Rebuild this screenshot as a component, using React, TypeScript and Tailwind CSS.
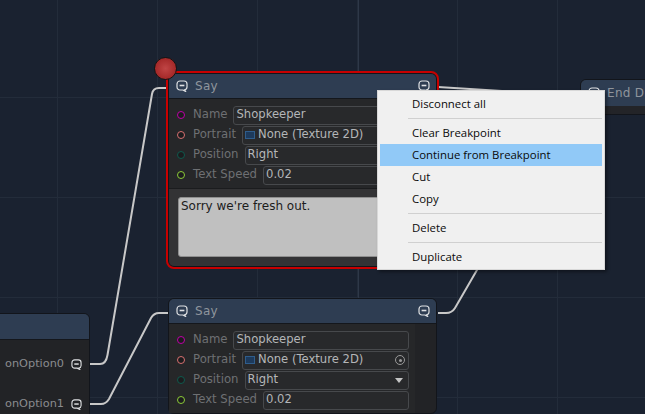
const uiFont = { fontFamily: '"DejaVu Sans", sans-serif' };

const BubbleIcon = ({ className }: { className?: string }) => (
    <svg viewBox="0 0 12 12" className={className} fill="none" stroke="#dfe1e3" strokeWidth="1.2">
        <path d="M4 1h4a3 3 0 0 1 3 3v3a3 3 0 0 1-2.400 2.900l.9 1.500-2.700-1.400H4a3 3 0 0 1-3-3V4a3 3 0 0 1 3-3z" />
        <path d="M3.600 5.500h4.800" strokeWidth="1.600" />
    </svg>
);

const Port = ({ color }: { color: string }) => (
    <span className={`w-[8px] h-[8px] rounded-full border-[1.5px] bg-[#1c1c1e] shrink-0 ${color}`} />
);

const Field = ({ children }: { children: React.ReactNode }) => (
    <div className="flex-1 h-[19px] flex items-center px-[2px] rounded-[3px] border border-[#47494c] bg-[#28292b] text-[11.6px] text-[#b4b6b8] whitespace-nowrap overflow-hidden">
        {children}
    </div>
);

const Row = ({ port, label, children }: { port: string; label: string; children: React.ReactNode }) => (
    <div className="h-[20px] flex items-center pl-[8px]">
        <Port color={port} />
        <span className="ml-[8px] mr-[6px] text-[11.7px] text-[#6e7073] whitespace-nowrap">{label}</span>
        {children}
    </div>
);

const SayNode = ({ selected, className }: { selected?: boolean; className: string }) => (
    <div className={`absolute w-[269px] rounded-[6px] border border-[#12151b] bg-[#222326] ${selected ? 'outline-2 outline-[#c80000]' : ''} ${className}`} style={uiFont}>
        <div className="h-[25px] flex items-center justify-between pl-[7px] pr-[6px] rounded-t-[5px] bg-[#2e3d52] border-b border-[#14171c]">
            <div className="flex items-center gap-[7px]">
                <BubbleIcon className="w-[12px] h-[12px]" />
                <span className="text-[12px] text-[#8f959d] tracking-[0.3px] -mt-[1px]">Say</span>
            </div>
            <BubbleIcon className="w-[12px] h-[12px]" />
        </div>
        <div className="flex">
            <div className="w-[246px] bg-[#262729] pt-[6px] pb-[3px] pr-[6px]">
                <Row port="border-[#c000a8]" label="Name"><Field>Shopkeeper</Field></Row>
                <Row port="border-[#d87070]" label="Portrait">
                    <Field>
                        <span className="w-[10px] h-[8px] mr-[3px] shrink-0 bg-[#1d3a5c] border border-[#2f5d8c]" />
                        <span className="flex-1">None (Texture 2D)</span>
                        <span className="w-[10px] h-[10px] mr-[1px] rounded-full border border-[#9a9a9a] flex items-center justify-center">
                            <span className="w-[3px] h-[3px] rounded-full bg-[#9a9a9a]" />
                        </span>
                    </Field>
                </Row>
                <Row port="border-[#0f5a4e]" label="Position">
                    <Field>
                        <span className="flex-1">Right</span>
                        <span className="mr-[3px] border-x-[4px] border-x-transparent border-t-[5px] border-t-[#c4c4c4]" />
                    </Field>
                </Row>
                <Row port="border-[#8ccc38]" label="Text Speed"><Field>0.02</Field></Row>
            </div>
        </div>
        {selected && (
            <div className="h-[78px] bg-[#333335] border-t border-[#1b1c1e] rounded-b-[5px] px-[9px] pt-[8px]">
                <div className="h-[60px] rounded-[3px] bg-[#c0c0c0] border border-[#8f8f8f] px-[2px] text-[12px] leading-[17px] text-[#1c1c1c]">
                    Sorry we're fresh out.
                </div>
            </div>
        )}
    </div>
);

const Option = ({ label }: { label: string }) => (
    <div className="h-[40px] flex items-center justify-end gap-[7px] pr-[7px]">
        <span className="mt-[1px] text-[11.300px] text-[#8a8c8f]">{label}</span>
        <BubbleIcon className="w-[11px] h-[11px]" />
    </div>
);

const MenuItem = ({ label, active }: { label: string; active?: boolean }) => (
    <div className={`h-[22px] flex items-center pl-[32px] text-[11.400px] text-[#0a0a0a] ${active ? 'bg-[#91c9f7]' : ''}`}>{label}</div>
);

const MenuSep = () => (
    <div className="h-[7px] pl-[28px] flex items-center">
        <div className="w-full h-px bg-[#d0d0d0]" />
    </div>
);

const App = () => {
    return (
        <div className="relative w-[645px] h-[414px] overflow-hidden bg-[#1a2230] bg-[linear-gradient(#232c3a_1px,transparent_1px),linear-gradient(90deg,#232c3a_1px,transparent_1px)] bg-size-[100px_100px] bg-position-[57px_97px]">
            <div className="absolute left-[358px] top-0 w-px h-[414px] bg-[#2e3848]" />

            <svg className="absolute inset-0" width="645" height="414" fill="none" stroke="#c8c8c8" strokeWidth="2">
                <path d="M90 364h10q6 0 7.500-9L152 94q1-6 7-6h9" />
                <path d="M90 404h11q5 0 8-5L151 318q3-5 8-5h10" />
                <path d="M438 87L520 92" />
                <path d="M438 313h8q6 0 9-5L580 92" />
            </svg>

            <div className="absolute left-[-10px] top-[313px] w-[100px] h-[110px] rounded-[6px] border border-[#12151b] bg-[#222326]" style={uiFont}>
                <div className="h-[26px] rounded-t-[5px] bg-[#2e3d52] border-b border-[#14171c]" />
                <div className="pt-[4px]">
                    <Option label="onOption0" />
                    <Option label="onOption1" />
                </div>
            </div>

            <div className="absolute left-[580px] top-[79px] w-[90px] h-[36px] rounded-[6px] border border-[#12151b] bg-[#232428]" style={uiFont}>
                <div className="h-[26px] flex items-center gap-[7px] pl-[7px] rounded-t-[5px] bg-[#2e3d52] text-[12px] text-[#8f959d] tracking-[0.3px] whitespace-nowrap">
                    <BubbleIcon className="w-[12px] h-[12px] shrink-0" />
                    <span className="-mt-[1px]">End Dialogue</span>
                </div>
            </div>

            <SayNode selected className="left-[168px] top-[73px]" />
            <SayNode className="left-[168px] top-[298px]" />

            <div className="absolute left-[154px] top-[57px] w-[23px] h-[23px] rounded-full border border-[#141414] bg-[radial-gradient(circle,#c04545,#981c1c)]" />

            <div className="absolute left-[377px] top-[90px] w-[228px] px-[2px] pt-[2px] pb-[1px] bg-[#f0f0f0] border border-[#d8d8d8] shadow-[2px_2px_3px_rgba(0,0,0,0.4)]" style={{ fontFamily: '"Open Sans", sans-serif' }}>
                <MenuItem label="Disconnect all" />
                <MenuSep />
                <MenuItem label="Clear Breakpoint" />
                <MenuItem label="Continue from Breakpoint" active />
                <MenuItem label="Cut" />
                <MenuItem label="Copy" />
                <MenuSep />
                <MenuItem label="Delete" />
                <MenuSep />
                <MenuItem label="Duplicate" />
            </div>
        </div>
    );
};

export default App;
